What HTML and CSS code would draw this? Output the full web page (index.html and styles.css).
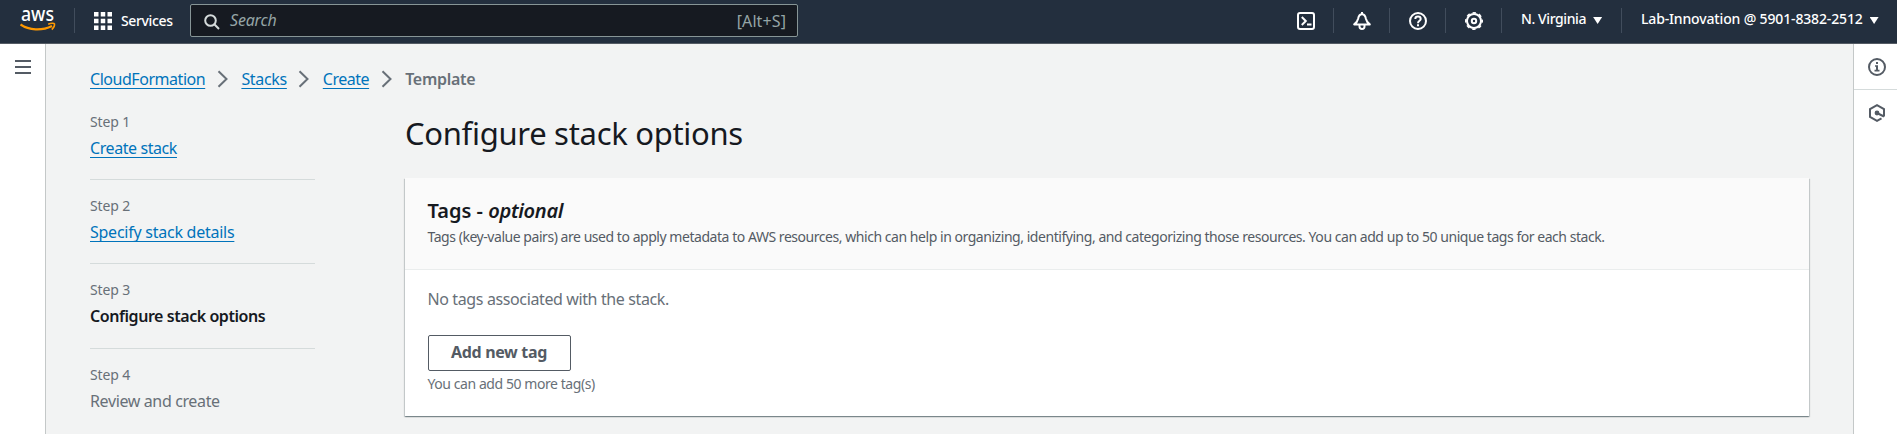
FILE: index.html
```
<!DOCTYPE html>
<html lang="en">
<head>
<meta charset="utf-8">
<title>Configure stack options</title>
<link rel="stylesheet" href="styles.css">
</head>
<body>
<header class="topbar">
  <a class="logo" aria-label="aws">
    <svg width="36" height="32" viewBox="0 -8 36 32">
      <text class="logo-text" x="1" y="12.500" textLength="33" lengthAdjust="spacingAndGlyphs">aws</text>
      <path d="M0.500 16.500C9 22.500 22 23 32 18" fill="none" stroke="#f90" stroke-width="2.200"/>
      <path d="M28.200 16.200C31 15 34 15 34.500 15.800C34.800 17.500 33.500 20 31.800 21.600" fill="none" stroke="#f90" stroke-width="1.500"/>
    </svg>
  </a>
  <div class="services">
    <svg width="18" height="18" viewBox="0 0 18 18" fill="#fff">
      <path d="M0 0h4.500v4.500H0zM6.750 0h4.500v4.500h-4.500zM13.500 0H18v4.500h-4.500zM0 6.750h4.500v4.500H0zM6.750 6.750h4.500v4.500h-4.500zM13.500 6.750H18v4.500h-4.500zM0 13.500h4.500V18H0zM6.750 13.500h4.500V18h-4.500zM13.500 13.500H18V18h-4.500z"/>
    </svg>
    <span class="services-label">Services</span>
  </div>
  <div class="search">
    <svg width="16" height="16" viewBox="0 0 16 16" fill="none" stroke="#d5dbdb" stroke-width="2">
      <circle cx="6.500" cy="6.500" r="5.300"/><path d="M10.300 10.300L15 15"/>
    </svg>
    <span class="search-placeholder">Search</span>
    <span class="search-key">[Alt+S]</span>
  </div>
  <nav class="tools">
    <div class="tool">
      <svg width="18" height="18" viewBox="0 0 18 18" fill="none" stroke="#fff" stroke-width="2">
        <rect x="1" y="1" width="16" height="16" rx="2"/><path d="M4.800 5l4 4-4 4M10 12.600h4.500"/>
      </svg>
    </div>
    <div class="tool">
      <svg width="18" height="18" viewBox="0 0 18 18" fill="none" stroke="#fff" stroke-width="2" stroke-linejoin="round">
        <path d="M9 0v2M1.200 12.400h15.600C14.300 10.800 13.500 9.500 12.900 6.800C12.300 3.500 11.200 2.200 9 2.200S5.700 3.500 5.100 6.800C4.500 9.500 3.700 10.800 1.200 12.400z"/><path d="M6.500 13v1.500a2.500 2.500 0 0 0 5 0V13"/>
      </svg>
    </div>
    <div class="tool">
      <svg width="18" height="18" viewBox="0 0 18 18" fill="none" stroke="#fff" stroke-width="2">
        <circle cx="9" cy="9" r="8"/><path d="M6.300 7c0-3.300 5.400-3.300 5.400 0C11.700 8.800 9 8.800 9 11.200M9 12.200v2"/>
      </svg>
    </div>
    <div class="tool">
      <svg width="18" height="18" viewBox="0 0 18 18" fill="none" stroke="#fff">
        <circle cx="9" cy="9" r="7" stroke-width="2"/><circle cx="9" cy="9" r="8.200" stroke-width="1.600" stroke-dasharray="3.400 3.040" stroke-dashoffset="1.700"/><circle cx="9" cy="9" r="2.200" stroke-width="2"/>
      </svg>
    </div>
    <div class="menu region"><span>N. Virginia</span><i class="caret"></i></div>
    <div class="menu account"><span>Lab-Innovation @ 5901-8382-2512</span><i class="caret"></i></div>
  </nav>
</header>
<div class="shell">
  <aside class="rail-left">
    <svg width="16" height="14" viewBox="0 0 16 14" fill="#545b64"><path d="M0 0h16v2H0zM0 6h16v2H0zM0 12h16v2H0z"/></svg>
  </aside>
  <main class="page">
    <nav class="crumbs">
      <a class="link crumb-1">CloudFormation</a>
      <svg class="sep" width="12" height="18" viewBox="0 0 12 18"><path d="M1.500 1.200L9.500 9l-8 7.800"/></svg>
      <a class="link crumb-2">Stacks</a>
      <svg class="sep" width="12" height="18" viewBox="0 0 12 18"><path d="M1.500 1.200L9.500 9l-8 7.800"/></svg>
      <a class="link crumb-3">Create</a>
      <svg class="sep" width="12" height="18" viewBox="0 0 12 18"><path d="M1.500 1.200L9.500 9l-8 7.800"/></svg>
      <span class="crumb-current">Template</span>
    </nav>
    <div class="columns">
      <ol class="steps">
        <li class="step"><small>Step 1</small><div><a class="link step-1">Create stack</a></div></li>
        <li class="step"><small>Step 2</small><div><a class="link step-2">Specify stack details</a></div></li>
        <li class="step"><small>Step 3</small><div class="step-active">Configure stack options</div></li>
        <li class="step"><small>Step 4</small><div class="step-next">Review and create</div></li>
      </ol>
      <section class="content">
        <h1>Configure stack options</h1>
        <div class="card">
          <div class="card-head">
            <h2>Tags - <em>optional</em></h2>
            <p>Tags (key-value pairs) are used to apply metadata to AWS resources, which can help in organizing, identifying, and categorizing those resources. You can add up to 50 unique tags for each stack.</p>
          </div>
          <div class="card-body">
            <p class="empty">No tags associated with the stack.</p>
            <button class="button">Add new tag</button>
            <p class="hint">You can add 50 more tag(s)</p>
          </div>
        </div>
      </section>
    </div>
  </main>
  <aside class="rail-right">
    <div class="rail-item">
      <svg width="18" height="18" viewBox="0 0 18 18"><circle cx="9" cy="9" r="8" fill="none" stroke="#545b64" stroke-width="2"/><path d="M8 4h2v2H8zM7 7.200h3v4.600h1.500v1.700h-5v-1.700H8V8.800H7z" fill="#545b64"/></svg>
    </div>
    <div class="rail-item">
      <svg width="18" height="18" viewBox="0 0 18 18" fill="none" stroke="#545b64" stroke-width="2"><path d="M16 12.500V5L9 1.200 2 5v8l7 3.800 4.500-2.500"/><path d="M9 9l7 3.500"/><circle cx="9" cy="9" r="1.400" fill="#545b64"/></svg>
    </div>
  </aside>
</div>
</body>
</html>
```
FILE: styles.css
```
* { box-sizing: border-box; }
body {
  margin: 0;
  height: 434px;
  overflow: hidden;
  background: #f2f3f3;
  color: #687078;
  font: 16px/24px "Noto Sans", "Open Sans", sans-serif;
}
svg { display: block; flex: none; }
h1, h2, p, ol { margin: 0; padding: 0; }

.topbar {
  display: flex;
  height: 44px;
  background: #232f3e;
  border-bottom: 1px solid #545b64;
  color: #fff;
  font-size: 14px;
}
.logo { width: 75px; height: 25px; margin-top: 8px; padding-left: 20px; border-right: 1px solid #414d5c; }
.logo svg { margin-top: -8px; }
.logo-text { font-size: 19px; font-weight: 500; fill: #fff; }
.services { display: flex; width: 115px; padding: 12px 0 0 19px; }
.services-label { margin-left: 9px; line-height: 17px; font-weight: 500; letter-spacing: -0.37px; }
.search {
  display: flex;
  align-items: flex-start;
  width: 608px;
  height: 33px;
  margin-top: 4px;
  padding: 9px 11px 0 13px;
  background: #161a21;
  border: 1px solid #879596;
  border-radius: 2px;
  color: #95a5a6;
  font-size: 16px;
  line-height: 13px;
}
.search-placeholder { margin-left: 10px; font-style: italic; letter-spacing: -0.2px; }
.search-key { margin-left: auto; padding-top: 1px; letter-spacing: 0.1px; }
.tools { display: flex; margin: 8px 0 0 auto; height: 25px; }
.tool { width: 56px; padding: 4px 0 0 19px; border-right: 1px solid #414d5c; }
.menu { display: flex; font-weight: 500; line-height: 22px; }
.region { width: 120px; padding-left: 19px; border-right: 1px solid #414d5c; letter-spacing: -0.4px; }
.account { width: 275px; padding-left: 19px; letter-spacing: -0.15px; }
.caret { margin: 9px 0 0 7px; width: 9px; height: 7px; background: #fff; clip-path: polygon(0 0, 100% 0, 50% 100%); }

.shell { display: flex; height: 390px; }
.rail-left { width: 46px; padding: 16px 0 0 15px; background: #fff; border-right: 1px solid #c4c8c8; }
.rail-right { width: 44px; background: #fff; border-left: 1px solid #c4c8c8; }
.rail-item { height: 46px; padding: 14px 0 0 14px; border-bottom: 1px solid #d5dbdb; }
.rail-item + .rail-item { border-bottom: 0; }
.page { flex: 1; padding: 22px 44px 0; }

.link { color: #0073bb; text-decoration: underline 1px; text-underline-offset: 3px; text-decoration-skip-ink: none; }
.crumbs { display: flex; height: 24px; line-height: 26px; }
.crumb-1 { width: 115px; letter-spacing: -0.46px; }
.crumb-2 { width: 45px; letter-spacing: -0.33px; }
.crumb-3 { width: 46px; letter-spacing: -0.48px; }
.crumb-current { font-weight: 600; letter-spacing: -0.3px; }
.sep { margin: 4px 12.400px 0 12px; fill: none; stroke: #687078; stroke-width: 2; }

.columns { display: flex; }
.steps { width: 225px; margin: 5.670px 90px 0 0; list-style: none; }
.step { height: 84.330px; padding-top: 16px; border-bottom: 1px solid #d5dbdb; }
.step:last-child { border-bottom: 0; }
.step small { display: block; margin-bottom: 4px; font-size: 14px; line-height: 20px; letter-spacing: -0.150px; }
.step-1 { letter-spacing: -0.42px; }
.step-2 { letter-spacing: -0.25px; }
.step-active { color: #16191f; font-weight: 600; letter-spacing: -0.44px; }
.step-next { letter-spacing: -0.37px; }

.content { flex: 1; padding-top: 23px; }
h1 { margin-bottom: 25px; color: #16191f; font-size: 31px; font-weight: 400; line-height: 40px; letter-spacing: -0.3px; }
.card { width: 1404px; height: 238px; background: #fff; box-shadow: 0 1px 1px 0 rgba(0, 28, 36, 0.3), 1px 1px 1px 0 rgba(0, 28, 36, 0.150), -1px 1px 1px 0 rgba(0, 28, 36, 0.150); }
.card-head { height: 92px; padding: 20px 23px 0 22.500px; background: #fafafa; border-bottom: 1px solid #eaeded; }
h2 { color: #16191f; font-size: 20px; font-weight: 600; line-height: 26px; }
h2 em { letter-spacing: -0.3px; }
.card-head p { margin-top: 3px; color: #545b64; font-size: 14px; line-height: 20px; letter-spacing: -0.457px; white-space: nowrap; }
.card-body { padding: 17px 22.500px 0; }
.empty { letter-spacing: -0.38px; }
.button {
  display: block;
  width: 143px;
  height: 36px;
  margin-top: 24px;
  padding: 0 0 2px;
  background: #fff;
  border: 1px solid #545b64;
  border-radius: 2px;
  color: #545b64;
  font: 700 16px/22px "Noto Sans", "Open Sans", sans-serif;
  letter-spacing: -0.33px;
}
.hint { margin-top: 3px; font-size: 14px; line-height: 20px; letter-spacing: -0.43px; }
```
